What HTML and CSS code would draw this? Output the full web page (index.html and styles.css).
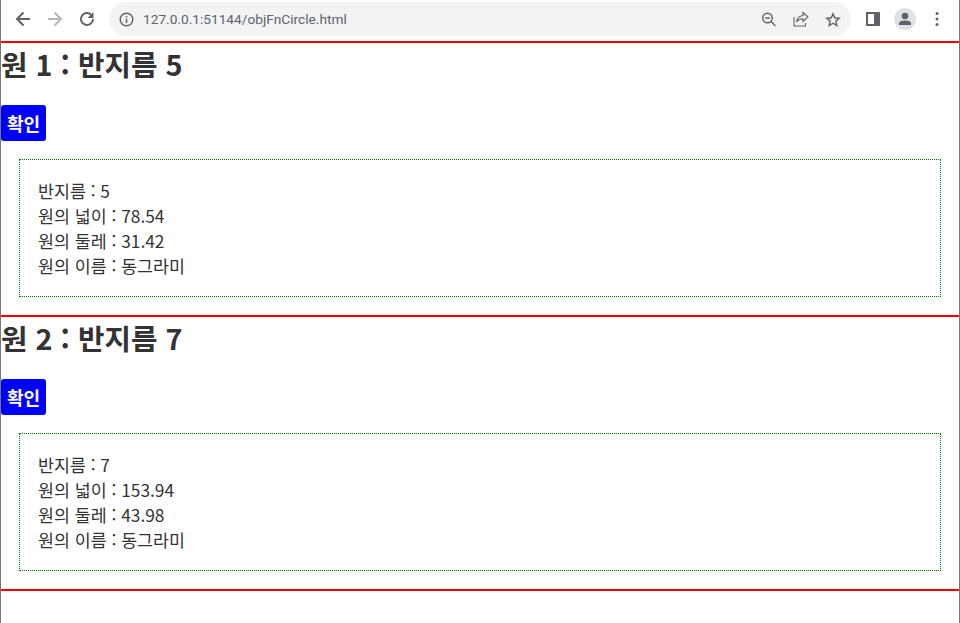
FILE: index.html
```html
<!DOCTYPE html>
<html lang="ko">
<head>
  <meta charset="UTF-8">
  <meta name="viewport" content="width=device-width, initial-scale=1.0">
  <title>objFnCircle</title>
  <link rel="stylesheet" href="styles.css">
</head>
<body>
  <div class="window">
    <div class="toolbar">
      <div class="nav-icons">
        <svg class="icon" viewBox="0 0 18 18"><path d="M16 9H3.500M9.500 2.500 3 9l6.500 6.500" fill="none" stroke="#5f6368" stroke-width="2"/></svg>
        <svg class="icon" viewBox="0 0 18 18"><path d="M2 9h12.500M8.500 2.500 15 9l-6.500 6.500" fill="none" stroke="#b4b6b9" stroke-width="2"/></svg>
        <svg class="icon" viewBox="0 0 18 18"><path d="M15 9a6 6 0 1 1-1.800-4.300" fill="none" stroke="#5f6368" stroke-width="2"/><path d="M15.500 2v6h-6z" fill="#5f6368"/></svg>
      </div>
      <div class="address">
        <svg class="info" viewBox="0 0 15 15"><circle cx="7.500" cy="7.500" r="6.300" fill="none" stroke="#5f6368" stroke-width="1.400"/><path d="M7.500 6.700v4.300M7.500 4v1.500" stroke="#5f6368" stroke-width="1.500"/></svg>
        <span class="url">127.0.0.1:51144/objFnCircle.html</span>
        <div class="address-icons">
          <svg class="icon" viewBox="0 0 18 18"><circle cx="7.500" cy="8" r="4.800" fill="none" stroke="#5f6368" stroke-width="1.400"/><path d="M5.200 8h4.600M11 11.500l4.500 4.500" stroke="#5f6368" stroke-width="1.400"/></svg>
          <svg class="icon" viewBox="0 0 18 18"><path d="M11 2.500 16 7l-5 4.500V8.800c-3 0-5 1-6.500 3 .5-3.400 2.700-5.800 6.500-6.300z" fill="none" stroke="#5f6368" stroke-width="1.100"/><path d="M2 7v9h11.500v-3" fill="none" stroke="#5f6368" stroke-width="1.100"/></svg>
          <svg class="icon" viewBox="0 0 18 18"><path d="m9 3.800 1.700 4 4.500.4-3.400 2.900 1 4.400L9 13.200l-3.800 2.300 1-4.400-3.400-2.900 4.500-.4z" fill="none" stroke="#5f6368" stroke-width="1.400"/></svg>
        </div>
      </div>
      <div class="side-icons">
        <svg class="icon" viewBox="0 0 18 18"><rect x="3" y="3" width="12" height="12" fill="none" stroke="#5f6368" stroke-width="2"/><rect x="10" y="3" width="5" height="12" fill="#5f6368"/></svg>
        <div class="avatar">
          <svg viewBox="0 0 16 16" width="16" height="16"><circle cx="8" cy="5" r="3.300" fill="#5f6368"/><path d="M2 14v-1.500C2 10.300 5.500 9.500 8 9.500s6 .8 6 3V14z" fill="#5f6368"/></svg>
        </div>
        <svg class="icon" viewBox="0 0 18 18"><circle cx="9" cy="3.500" r="1.500" fill="#5f6368"/><circle cx="9" cy="9" r="1.500" fill="#5f6368"/><circle cx="9" cy="14.500" r="1.500" fill="#5f6368"/></svg>
      </div>
    </div>

    <hr class="divider">
    <section class="circle">
      <h1>원 1 : 반지름 5</h1>
      <button class="confirm">확인</button>
      <div class="result">
        <p>반지름 : 5</p>
        <p>원의 넓이 : 78.54</p>
        <p>원의 둘레 : 31.42</p>
        <p>원의 이름 : 동그라미</p>
      </div>
    </section>
    <hr class="divider">
    <section class="circle">
      <h1>원 2 : 반지름 7</h1>
      <button class="confirm">확인</button>
      <div class="result">
        <p>반지름 : 7</p>
        <p>원의 넓이 : 153.94</p>
        <p>원의 둘레 : 43.98</p>
        <p>원의 이름 : 동그라미</p>
      </div>
    </section>
    <hr class="divider">
  </div>
</body>
</html>
```

FILE: styles.css
```css
html, body {
  margin: 0;
  padding: 0;
  height: 100%;
  overflow: hidden;
  background-color: #ffffff;
}

body {
  font-family: "Noto Sans CJK KR", "Noto Sans", sans-serif;
  color: #333333;
}

.window {
  height: 100%;
  box-sizing: border-box;
  border-left: 1px solid #787878;
  border-right: 1px solid #787878;
}

.toolbar {
  display: flex;
  align-items: center;
  height: 41px;
  padding: 0 13px 3px 13px;
  box-sizing: border-box;
}

.icon {
  width: 18px;
  height: 18px;
  display: block;
}

.nav-icons {
  display: flex;
  gap: 14px;
}

.address {
  display: flex;
  align-items: center;
  width: 742px;
  height: 34px;
  margin-left: 13px;
  padding: 0 9px 0 10px;
  box-sizing: border-box;
  border-radius: 17px;
  background-color: #f1f3f4;
}

.info {
  width: 15px;
  height: 15px;
}

.url {
  margin-left: 9px;
  font-family: "Roboto", "Liberation Sans", sans-serif;
  font-size: 13.7px;
  color: #5f6368;
}

.address-icons {
  display: flex;
  gap: 14px;
  margin-left: auto;
}

.side-icons {
  display: flex;
  align-items: center;
  gap: 12px;
  margin-left: 13px;
}

.avatar {
  display: flex;
  align-items: center;
  justify-content: center;
  width: 22px;
  height: 22px;
  border-radius: 50%;
  background-color: #dee1e6;
}

.divider {
  height: 2px;
  margin: 0;
  border: none;
  background-color: #ff0000;
}

h1 {
  margin: 0;
  padding-bottom: 20px;
  font-size: 28.8px;
  line-height: 42px;
  font-weight: 700;
}

.confirm {
  display: block;
  height: 36px;
  padding: 0 6px;
  border: none;
  border-radius: 3px;
  background-color: #0000ff;
  color: #ffffff;
  font-family: inherit;
  font-size: 18px;
  font-weight: 700;
}

.result {
  margin: 18px;
  padding: 18px;
  border: 1px dotted #008000;
}

.result p {
  margin: 0;
  font-size: 17.33px;
  line-height: 25px;
}
```
